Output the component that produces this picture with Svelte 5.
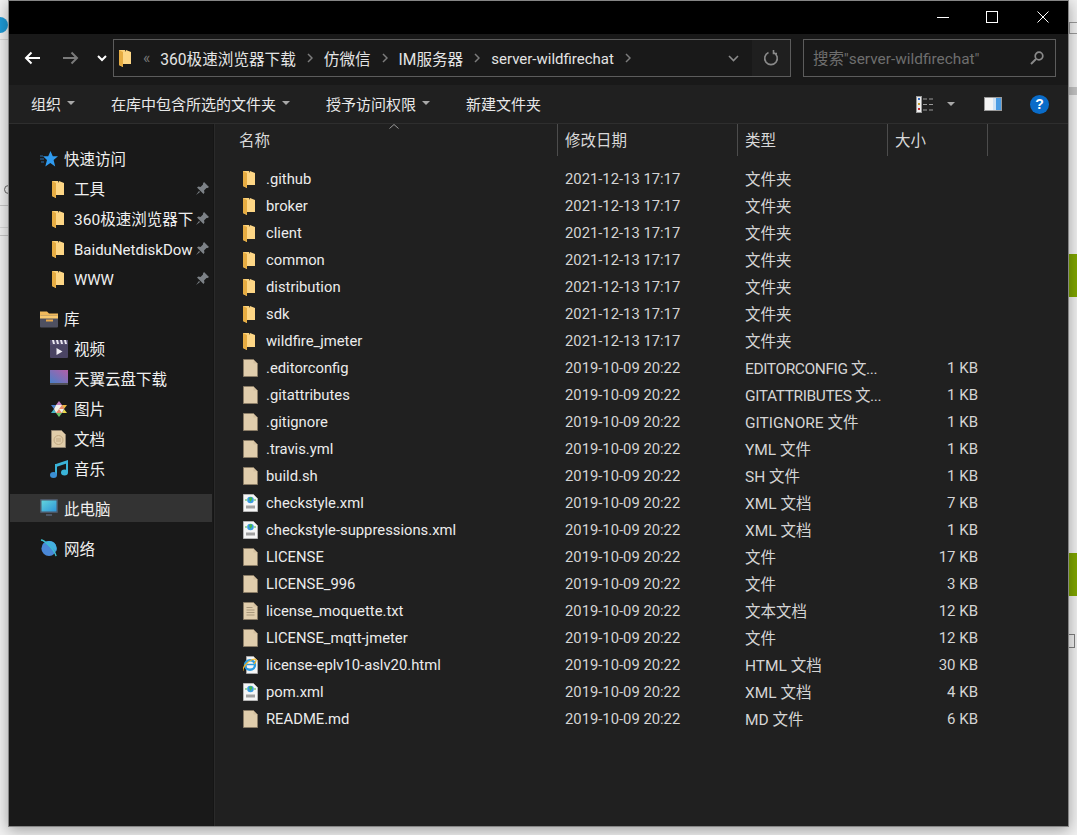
<script>
    const quick = [
        { label: "工具" },
        { label: "360极速浏览器下" },
        { label: "BaiduNetdiskDow", latin: true },
        { label: "WWW", latin: true }
    ];

    const library = [
        { label: "视频", icon: "video" },
        { label: "天翼云盘下载", icon: "cloud" },
        { label: "图片", icon: "photo" },
        { label: "文档", icon: "doc" },
        { label: "音乐", icon: "music" }
    ];

    const folderDate = "2021-12-13 17:17";
    const fileDate = "2019-10-09 20:22";

    const files = [
        { name: ".github", date: folderDate, type: "文件夹", icon: "folder" },
        { name: "broker", date: folderDate, type: "文件夹", icon: "folder" },
        { name: "client", date: folderDate, type: "文件夹", icon: "folder" },
        { name: "common", date: folderDate, type: "文件夹", icon: "folder" },
        { name: "distribution", date: folderDate, type: "文件夹", icon: "folder" },
        { name: "sdk", date: folderDate, type: "文件夹", icon: "folder" },
        { name: "wildfire_jmeter", date: folderDate, type: "文件夹", icon: "folder" },
        { name: ".editorconfig", date: fileDate, type: "EDITORCONFIG 文...", size: "1 KB", icon: "file" },
        { name: ".gitattributes", date: fileDate, type: "GITATTRIBUTES 文...", size: "1 KB", icon: "file" },
        { name: ".gitignore", date: fileDate, type: "GITIGNORE 文件", size: "1 KB", icon: "file" },
        { name: ".travis.yml", date: fileDate, type: "YML 文件", size: "1 KB", icon: "file" },
        { name: "build.sh", date: fileDate, type: "SH 文件", size: "1 KB", icon: "file" },
        { name: "checkstyle.xml", date: fileDate, type: "XML 文档", size: "7 KB", icon: "xml" },
        { name: "checkstyle-suppressions.xml", date: fileDate, type: "XML 文档", size: "1 KB", icon: "xml" },
        { name: "LICENSE", date: fileDate, type: "文件", size: "17 KB", icon: "file" },
        { name: "LICENSE_996", date: fileDate, type: "文件", size: "3 KB", icon: "file" },
        { name: "license_moquette.txt", date: fileDate, type: "文本文档", size: "12 KB", icon: "txt" },
        { name: "LICENSE_mqtt-jmeter", date: fileDate, type: "文件", size: "12 KB", icon: "file" },
        { name: "license-eplv10-aslv20.html", date: fileDate, type: "HTML 文档", size: "30 KB", icon: "html" },
        { name: "pom.xml", date: fileDate, type: "XML 文档", size: "4 KB", icon: "xml" },
        { name: "README.md", date: fileDate, type: "MD 文件", size: "6 KB", icon: "file" }
    ];
</script>

{#snippet folderIcon()}
    <svg class="ico-folder" viewBox="0 0 12 18">
        <path d="M0 1h6l1 2h5v12H4v3l-4-2z" fill="#fbd27c" />
        <path d="M0 1l4 2v15l-4-2z" fill="#e6ac42" />
        <path d="M4 3h3V1l5 2v12H4z" fill="#fdd685" />
    </svg>
{/snippet}

{#snippet fileIcon(kind)}
    <svg class="ico-file" viewBox="0 0 15 18">
        {#if kind === "file" || kind === "txt"}
            <path d="M.5.5h10l4 4v13H.5z" fill="#e0cdac" stroke="#8a7c66" />
            <path d="M10.500 1v3.500H14z" fill="#d2bf9e" />
            {#if kind === "txt"}
                <path d="M3.500 5.500h6M3.500 8h8M3.500 10.500h8M3.500 13h8" stroke="#a8977b" />
            {/if}
        {:else if kind === "xml"}
            <path d="M.5.5h10l4 4v13H.5z" fill="#f6f6f6" stroke="#b4b4b4" />
            <circle cx="7.500" cy="6" r="3.300" fill="#3a9be0" />
            <path d="M6 4l2.500-1 .8 2-2 3z" fill="#46b946" />
            <path d="M2 6h2M11 6h2" stroke="#46b946" />
            <path d="M3 11.500h9v3H3z" fill="#a0a0a0" />
        {:else}
            <path d="M3.500.5h7l4 4v13h-11z" fill="#f6f6f6" stroke="#a8a8a8" />
            <ellipse cx="7" cy="9" rx="5" ry="4.800" fill="none" stroke="#2c9ce0" stroke-width="2.400" />
            <path d="M2.500 8.500h9" stroke="#2c9ce0" stroke-width="1.500" />
            <path d="M0 15c-1-3 5-11 12-12 2 0 1 3-1 5" fill="none" stroke="#f0b428" stroke-width="1.200" />
        {/if}
    </svg>
{/snippet}

{#snippet libraryIcon(kind)}
    <svg class="ico-lib" viewBox="0 0 18 18">
        {#if kind === "video"}
            <rect y="4" width="18" height="14" rx="1" fill="#4a4463" />
            <path d="M0 0h18v5H0z" fill="#544d6e" />
            <path d="M2 0h2l1 4H3zM6 0h2l1 4H7zM10 0h2l1 4h-2zM14 0h2l1 4h-2z" fill="#e9e6f0" />
            <path d="M6.500 8l6 3.500-6 3.500z" fill="#f1eff6" />
        {:else if kind === "cloud"}
            <defs>
                <linearGradient id="cloudfill" x1="0" y1="1" x2="1" y2="0">
                    <stop offset="0" stop-color="#4a80c8" />
                    <stop offset="1" stop-color="#b45ea6" />
                </linearGradient>
            </defs>
            <rect y="0" width="18" height="13" fill="url(#cloudfill)" />
            <rect y="13" width="18" height="2" fill="#4f4f55" />
        {:else if kind === "photo"}
            <path d="M9 1l3 4H6z" fill="#c07fc0" />
            <path d="M12 5h5l-3 4z" fill="#f0b840" />
            <path d="M14 9l3 4h-5z" fill="#e8d84a" />
            <path d="M12 13l-3 4-3-4z" fill="#6cc46c" />
            <path d="M6 13H1l3-4z" fill="#44b8c8" />
            <path d="M4 9L1 5h5z" fill="#4a80d0" />
            <path d="M6 5h6l2 4-2 4H6L4 9z" fill="#f4f0ea" />
            <path d="M9 9l3-4 2 4zM9 9l-3 4 6 0z" fill="#ec8a6a" />
        {:else if kind === "doc"}
            <path d="M1.500.500h10l4 4v13h-14z" fill="#e0cca9" stroke="#8f8270" />
            <circle cx="8.500" cy="10" r="4.500" fill="none" stroke="#c0a781" />
            <path d="M6 9h5M6 11h5" stroke="#c0a781" />
        {:else if kind === "music"}
            <path d="M6 4l12-4v3L6 7z" fill="#3ab4d8" />
            <path d="M5 4h2v11H5zM16 1h2v11h-2z" fill="#3ab4d8" />
            <ellipse cx="3.500" cy="15" rx="3.500" ry="3" fill="#3b8fd4" />
            <ellipse cx="14.500" cy="12.500" rx="3.500" ry="3" fill="#3ab4d8" />
        {/if}
    </svg>
{/snippet}

<div class="desktop">
    <div class="behind b-blue"></div>
    <div class="behind b-line1"></div>
    <div class="behind b-line2"></div>
    <div class="behind b-line3"></div>
    <div class="behind b-line4"></div>
    <div class="behind b-mark"></div>
    <div class="behind b-box1"></div>
    <div class="behind b-grey"></div>
    <div class="behind b-green1"></div>
    <div class="behind b-green2"></div>
    <div class="behind b-box2"></div>

    <div class="window">
        <div class="titlebar">
            <button class="winbtn" aria-label="最小化">
                <svg viewBox="0 0 12 12" width="12" height="12"><path d="M0 6.500h12" stroke="#fff" /></svg>
            </button>
            <button class="winbtn" aria-label="最大化">
                <svg viewBox="0 0 12 12" width="12" height="12"><rect x=".5" y=".5" width="11" height="11" fill="none" stroke="#fff" /></svg>
            </button>
            <button class="winbtn close" aria-label="关闭">
                <svg viewBox="0 0 12 12" width="12" height="12"><path d="M.5.5l11 11M11.500.5l-11 11" stroke="#fff" /></svg>
            </button>
        </div>

        <div class="navbar">
            <div class="navbtns">
                <svg width="16" height="14" viewBox="0 0 16 14"><path d="M16 7H2M7.500 1.500L2 7l5.500 5.500" fill="none" stroke="#fff" stroke-width="2" /></svg>
                <svg width="16" height="14" viewBox="0 0 16 14"><path d="M0 7h14M8.500 1.500L14 7l-5.500 5.500" fill="none" stroke="#7a7a7a" stroke-width="2" /></svg>
                <svg width="10" height="7" viewBox="0 0 10 7"><path d="M1 1l4 4 4-4" fill="none" stroke="#fff" stroke-width="2" /></svg>
            </div>
            <div class="address">
                <div class="path">
                    {@render folderIcon()}
                    <span class="chev-left">«</span>
                    <span class="crumb">360极速浏览器下载</span>
                    <svg class="sep" viewBox="0 0 6 10"><path d="M1 1l4 4-4 4" fill="none" stroke="#7c7c7c" stroke-width="1.500" /></svg>
                    <span class="crumb">仿微信</span>
                    <svg class="sep" viewBox="0 0 6 10"><path d="M1 1l4 4-4 4" fill="none" stroke="#7c7c7c" stroke-width="1.500" /></svg>
                    <span class="crumb">IM服务器</span>
                    <svg class="sep" viewBox="0 0 6 10"><path d="M1 1l4 4-4 4" fill="none" stroke="#7c7c7c" stroke-width="1.500" /></svg>
                    <span class="crumb crumb-last">server-wildfirechat</span>
                    <svg class="sep" viewBox="0 0 6 10"><path d="M1 1l4 4-4 4" fill="none" stroke="#7c7c7c" stroke-width="1.500" /></svg>
                </div>
                <svg class="drop" width="11" height="7" viewBox="0 0 11 7"><path d="M1 1l4.500 4.500L10 1" fill="none" stroke="#8a8a8a" stroke-width="1.600" /></svg>
                <div class="refresh">
                    <svg width="16" height="16" viewBox="0 0 16 16"><path d="M10.500 2.500a6.300 6.300 0 1 1-5 0M10.500 0v3.500H14" fill="none" stroke="#8a8a8a" stroke-width="1.600" /></svg>
                </div>
            </div>
            <div class="search">
                <span class="placeholder">搜索"server-wildfirechat"</span>
                <svg width="14" height="14" viewBox="0 0 14 14"><circle cx="9" cy="5" r="3.800" fill="none" stroke="#8a8a8a" stroke-width="1.700" /><path d="M6 8l-5 5" stroke="#8a8a8a" stroke-width="2" /></svg>
            </div>
        </div>

        <div class="toolbar">
            <button class="tool t-org">组织<i class="caret"></i></button>
            <button class="tool t-lib">在库中包含所选的文件夹<i class="caret"></i></button>
            <button class="tool t-share">授予访问权限<i class="caret"></i></button>
            <button class="tool">新建文件夹</button>
            <div class="tools-right">
                <svg width="18" height="17" viewBox="0 0 18 17">
                    <rect x=".5" y=".5" width="5" height="16" fill="#eee" stroke="#999" />
                    <path d="M2 2h2v2H2z" fill="#3a70c0" /><path d="M2 7h2v2H2z" fill="#c9a030" /><path d="M2 12h2v2H2z" fill="#c03030" />
                    <path d="M7 3h4M13 3h4M7 8.500h4M13 8.500h4M7 14h4M13 14h4" stroke="#9a9a9a" />
                </svg>
                <i class="caret view-caret"></i>
                <svg class="pane" width="18" height="14" viewBox="0 0 18 14">
                    <rect width="18" height="14" fill="#9a9a9a" />
                    <rect x="1" y="1" width="8" height="12" fill="#f4f4f4" />
                    <rect x="9" y="1" width="3" height="12" fill="#cfe2f5" />
                    <rect x="12" y="1" width="5" height="12" fill="#4b9be2" />
                </svg>
                <span class="help">?</span>
            </div>
        </div>

        <div class="body">
            <nav class="sidebar">
                <div class="side-row top">
                    <svg class="ico-star" viewBox="0 0 18 16">
                        <path d="M10.500 0l2.300 5.300H18l-4.400 3.800 1.600 6.400-4.900-3.500-5 3.500 1.700-6.400L3 5.300h5.200z" fill="#2f9bf0" />
                        <path d="M0 5h3M0 8h4M1 11h3" stroke="#2f6fa8" />
                    </svg>
                    <span class="side-label">快速访问</span>
                </div>
                {#each quick as q}
                    <div class="side-row child folder-row">
                        {@render folderIcon()}
                        <span class="side-label quick-label" class:latin={q.latin}>{q.label}</span>
                        <svg class="pin" width="13" height="13" viewBox="0 0 13 13">
                            <path d="M8 0l5 5-1.500 1-1 0-2.500 2.500.5 2L7.500 12 1 5.500l1.500-1 2 .5L7 2.500 7 1.500z" fill="#7c8186" />
                            <path d="M3 9l-3 4 4-3z" fill="#7c8186" />
                        </svg>
                    </div>
                {/each}

                <div class="side-row top group">
                    <svg class="ico-lib" viewBox="0 0 18 17">
                        <path d="M0 1h7l2 2h9v3H0z" fill="#f0b95c" />
                        <rect y="5" width="18" height="12" rx="1" fill="#4e5061" />
                        <rect y="5" width="18" height="3" fill="#f9c96f" />
                        <rect x="6" y="9" width="7" height="2" fill="#e8a94c" />
                    </svg>
                    <span class="side-label">库</span>
                </div>
                {#each library as l}
                    <div class="side-row child">
                        {@render libraryIcon(l.icon)}
                        <span class="side-label">{l.label}</span>
                    </div>
                {/each}

                <div class="side-row top group selected">
                    <svg class="ico-lib" viewBox="0 0 18 18">
                        <rect width="18" height="14" rx="1" fill="#4c5666" />
                        <defs>
                            <linearGradient id="screen" x1="0" y1="0" x2="1" y2="1">
                                <stop offset="0" stop-color="#62d4dc" />
                                <stop offset="1" stop-color="#2f95d8" />
                            </linearGradient>
                        </defs>
                        <rect x="1.500" y="1.500" width="15" height="11" fill="url(#screen)" />
                        <rect x="6" y="15" width="6" height="2" fill="#4c5666" />
                    </svg>
                    <span>此电脑</span>
                </div>

                <div class="side-row top group after-selected">
                    <svg class="ico-lib" viewBox="0 0 19 19">
                        <circle cx="9.500" cy="10" r="8" fill="#4a88d8" />
                        <path d="M9.500 2a8 8 0 0 1 7.500 11L6 3z" fill="#44b0e0" />
                        <path d="M1 1c3 0 14 9 16 17" fill="none" stroke="#3cc0d0" stroke-width="1.500" />
                    </svg>
                    <span>网络</span>
                </div>
            </nav>

            <div class="listing">
                <div class="cols head">
                    <div class="hcell name-col">名称<svg class="sort" width="10" height="5" viewBox="0 0 10 5"><path d="M.5 4.500L5 .5l4.500 4" fill="none" stroke="#9a9a9a" /></svg></div>
                    <div class="hcell">修改日期</div>
                    <div class="hcell">类型</div>
                    <div class="hcell">大小</div>
                </div>
                <div class="rows">
                    {#each files as f}
                        <div class="cols row">
                            <div class="name">
                                <span class="icon-slot">
                                    {#if f.icon === "folder"}
                                        {@render folderIcon()}
                                    {:else}
                                        {@render fileIcon(f.icon)}
                                    {/if}
                                </span>
                                {f.name}
                            </div>
                            <div class="date">{f.date}</div>
                            <div class="type" class:tight={f.type.endsWith("...")}>{f.type}</div>
                            <div class="size">{f.size ?? ""}</div>
                        </div>
                    {/each}
                </div>
            </div>
        </div>
    </div>
</div>

<style>
    :global(body) {
        margin: 0;
        background: #f1f1f1;
    }

    .desktop {
        position: relative;
        width: 1077px;
        height: 835px;
        overflow: hidden;
        padding: 0 0 0 8px;
        box-sizing: border-box;
        font-family: Roboto, "Noto Sans CJK SC", sans-serif;
        font-size: 15px;
        color: #e8e8e8;
    }

    /* page that shows behind the window */
    .behind {
        position: absolute;
    }
    .b-blue { left: -8px; top: 17px; width: 16px; height: 16px; border-radius: 50%; background: #1e9ad6; }
    .b-line1 { left: 0; top: 39px; width: 9px; height: 1px; background: #d8d8d8; }
    .b-line2 { left: 0; top: 205px; width: 9px; height: 1px; background: #c8c8c8; }
    .b-line3 { left: 0; top: 227px; width: 9px; height: 1px; background: #d8d8d8; }
    .b-line4 { left: 0; top: 235px; width: 9px; height: 1px; background: #c8c8c8; }
    .b-mark { left: 4px; top: 185px; width: 7px; height: 7px; border-radius: 50%; border: 1px solid #666; }
    .b-box1 { left: 1069px; top: 22px; width: 12px; height: 10px; border: 1px solid #999; }
    .b-grey { left: 1069px; top: 87px; width: 8px; height: 8px; background: #c4c4c4; }
    .b-green1 { left: 1069px; top: 254px; width: 8px; height: 43px; background: #7fa600; }
    .b-green2 { left: 1069px; top: 553px; width: 8px; height: 43px; background: #7fa600; }
    .b-box2 { left: 1066px; top: 634px; width: 7px; height: 12px; border: 1px solid #808080; }

    .window {
        position: relative;
        box-sizing: border-box;
        width: 1061px;
        height: 827px;
        border: 1px solid #858585;
        background: #202020;
        box-shadow: 0 3px 14px rgba(0, 0, 0, 0.35);
        display: flex;
        flex-direction: column;
    }

    .titlebar {
        height: 33px;
        background: #000;
        display: flex;
        justify-content: flex-end;
        gap: 37px;
        padding: 10px 19px 0 0;
        box-sizing: border-box;
        flex: none;
    }
    .winbtn {
        all: unset;
        width: 12px;
        height: 12px;
        display: block;
    }
    .winbtn svg {
        display: block;
    }
    .winbtn.close {
        margin-left: 2px;
    }

    .navbar {
        height: 51px;
        background: #191919;
        display: flex;
        align-items: flex-start;
        padding-top: 5px;
        box-sizing: border-box;
        flex: none;
    }
    .navbtns {
        width: 104px;
        height: 38px;
        display: flex;
        align-items: center;
        padding-left: 15px;
        box-sizing: border-box;
        gap: 23px;
        flex: none;
    }
    .navbtns svg:last-child {
        margin-left: -5px;
    }
    .address {
        width: 678px;
        height: 38px;
        box-sizing: border-box;
        border: 1px solid #5c5c5c;
        display: flex;
        align-items: center;
        flex: none;
    }
    .path {
        flex: 1;
        display: flex;
        align-items: center;
        padding-left: 5px;
        padding-bottom: 1px;
        color: #e4e4e4;
        font-size: 15.600px;
        min-width: 0;
    }
    .crumb-last {
        font-size: 15px;
        padding-top: 3px;
    }
    .chev-left {
        color: #777;
        margin: 0 10px 0 12px;
    }
    .sep {
        width: 6px;
        height: 10px;
        margin: 0 11px 0 11px;
        flex: none;
    }
    .drop {
        margin-right: 13px;
    }
    .refresh {
        width: 38px;
        height: 36px;
        background: #1f1f1f;
        display: flex;
        align-items: center;
        justify-content: center;
        flex: none;
    }
    .search {
        width: 253px;
        height: 38px;
        margin-left: 12px;
        box-sizing: border-box;
        border: 1px solid #5c5c5c;
        display: flex;
        align-items: center;
        justify-content: space-between;
        padding: 0 11px 0 9px;
        flex: none;
    }
    .placeholder {
        color: #6e6e6e;
        font-size: 15.400px;
        padding-bottom: 3px;
    }

    .toolbar {
        height: 39px;
        background: #202020;
        border-bottom: 1px solid #2e2e2e;
        box-sizing: border-box;
        display: flex;
        align-items: center;
        padding-left: 22px;
        flex: none;
    }
    .tool {
        all: unset;
        display: flex;
        align-items: center;
        font-size: 15px;
        color: #e8e8e8;
        font-family: "Noto Sans CJK SC", sans-serif;
        padding-bottom: 2px;
    }
    .t-org { margin-right: 36px; }
    .t-lib { margin-right: 36px; }
    .t-share { margin-right: 36px; }
    .caret {
        display: inline-block;
        width: 0;
        height: 0;
        border-left: 4px solid transparent;
        border-right: 4px solid transparent;
        border-top: 4px solid #a8a8a8;
        margin-left: 6px;
    }
    .tools-right {
        margin-left: auto;
        display: flex;
        align-items: center;
        padding-right: 19px;
    }
    .view-caret {
        margin: 0 29px 0 13px;
    }
    .help {
        width: 19px;
        height: 19px;
        border-radius: 50%;
        background: #0a6cc9;
        color: #fff;
        font: bold 14px/19px "Liberation Sans", sans-serif;
        text-align: center;
        margin-left: 28px;
    }

    .body {
        flex: 1;
        display: flex;
        min-height: 0;
    }
    .sidebar {
        width: 204px;
        background: #191919;
        padding-top: 20px;
        box-sizing: border-box;
        flex: none;
        box-shadow: 1px 0 0 #151515, 2px 0 0 #2a2a2a;
        font-size: 15.500px;
        color: #f0f0f0;
    }
    .side-row {
        height: 30px;
        display: flex;
        align-items: center;
        position: relative;
    }
    .side-label {
        padding-bottom: 2px;
    }
    .side-row.top {
        padding-left: 31px;
        gap: 6px;
    }
    .side-row.child {
        padding-left: 41px;
        gap: 6px;
    }
    .side-row.folder-row {
        padding-left: 43px;
    }
    .quick-label {
        margin-left: 4px;
        white-space: nowrap;
    }
    .quick-label.latin {
        font-size: 15px;
        padding-bottom: 0;
        padding-top: 2px;
    }
    .side-row.group {
        margin-top: 10px;
    }
    .selected {
        background: #333;
        height: 28px;
        margin: 11px 1px 11px;
        padding-left: 30px !important;
    }
    .side-row.after-selected {
        margin-top: 11px;
    }
    .pin {
        position: absolute;
        left: 187px;
        top: 8px;
    }
    .ico-star {
        width: 18px;
        height: 16px;
        flex: none;
    }
    .ico-folder {
        width: 12px;
        height: 18px;
        flex: none;
    }
    .ico-file {
        width: 15px;
        height: 18px;
        display: block;
    }
    .ico-lib {
        width: 18px;
        height: 18px;
        flex: none;
    }

    .listing {
        flex: 1;
        margin-left: 4px;
        min-width: 0;
    }
    .cols {
        display: grid;
        grid-template-columns: 341px 180px 150px 100px;
    }
    .head {
        height: 32px;
        font-family: "Noto Sans CJK SC", sans-serif;
        font-size: 15.500px;
        color: #d8d8d8;
    }
    .hcell {
        border-right: 1px solid #4c4c4c;
        padding-left: 7px;
        padding-bottom: 2px;
        box-sizing: border-box;
        display: flex;
        align-items: center;
        position: relative;
    }
    .name-col {
        padding-left: 22px;
    }
    .sort {
        position: absolute;
        left: 172px;
        top: 0;
    }
    .rows {
        padding-top: 9px;
    }
    .row {
        height: 27px;
        align-items: center;
        white-space: nowrap;
    }
    .name {
        display: flex;
        align-items: center;
        padding-left: 26px;
        color: #ececec;
        font-size: 14.800px;
    }
    .icon-slot {
        width: 23px;
        display: flex;
        align-items: center;
    }
    .date {
        padding-left: 7px;
        color: #d4d4d4;
        font-size: 14.800px;
    }
    .type {
        padding-left: 7px;
        padding-bottom: 2px;
        color: #d4d4d4;
        font-size: 15.500px;
    }
    .type.tight {
        letter-spacing: -0.4px;
    }
    .size {
        text-align: right;
        padding-right: 10px;
        color: #d4d4d4;
    }
</style>
